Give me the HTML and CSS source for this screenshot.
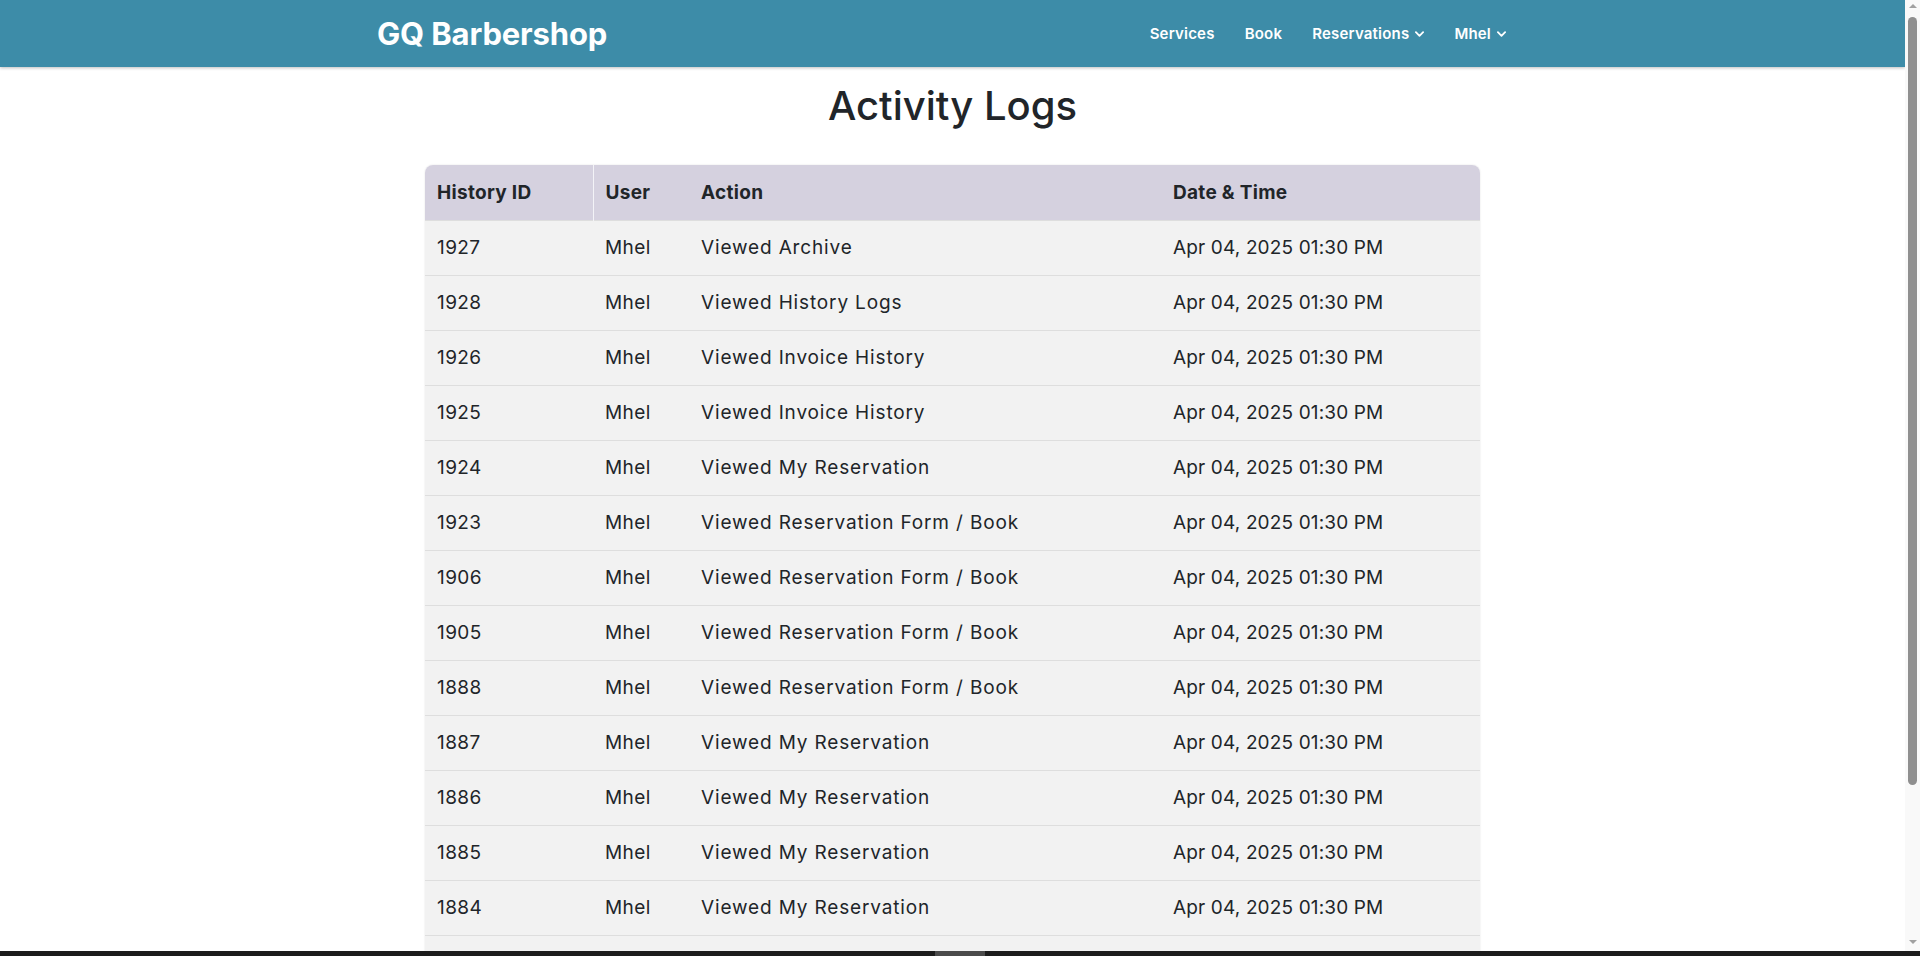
FILE: index.html
```html
<!DOCTYPE html>
<html lang="en">
<head>
<meta charset="utf-8">
<title>Activity Logs - GQ Barbershop</title>
<link rel="stylesheet" href="styles.css">
</head>
<body>
<header class="navbar">
  <a class="brand" href="#">GQ Barbershop</a>
  <nav class="nav-links">
    <a href="#" class="nav-link">Services</a>
    <a href="#" class="nav-link">Book</a>
    <a href="#" class="nav-link">Reservations <svg class="chev" viewBox="0 0 10 6" width="9" height="6"><path d="M1 1l4 4 4-4" fill="none" stroke="#fff" stroke-width="2" stroke-linecap="round" stroke-linejoin="round"/></svg></a>
    <a href="#" class="nav-link">Mhel <svg class="chev" viewBox="0 0 10 6" width="9" height="6"><path d="M1 1l4 4 4-4" fill="none" stroke="#fff" stroke-width="2" stroke-linecap="round" stroke-linejoin="round"/></svg></a>
  </nav>
</header>
<main class="content">
  <h1 class="title">Activity Logs</h1>
  <div class="table-wrap">
    <table class="logs">
      <thead>
        <tr><th class="c-id">History ID</th><th class="c-user">User</th><th class="c-action">Action</th><th class="c-date">Date &amp; Time</th></tr>
      </thead>
      <tbody>
        <tr><td>1927</td><td>Mhel</td><td class="act">Viewed Archive</td><td class="dt">Apr 04, 2025 01:30 PM</td></tr>
        <tr><td>1928</td><td>Mhel</td><td class="act">Viewed History Logs</td><td class="dt">Apr 04, 2025 01:30 PM</td></tr>
        <tr><td>1926</td><td>Mhel</td><td class="act">Viewed Invoice History</td><td class="dt">Apr 04, 2025 01:30 PM</td></tr>
        <tr><td>1925</td><td>Mhel</td><td class="act">Viewed Invoice History</td><td class="dt">Apr 04, 2025 01:30 PM</td></tr>
        <tr><td>1924</td><td>Mhel</td><td class="act">Viewed My Reservation</td><td class="dt">Apr 04, 2025 01:30 PM</td></tr>
        <tr><td>1923</td><td>Mhel</td><td class="act">Viewed Reservation Form / Book</td><td class="dt">Apr 04, 2025 01:30 PM</td></tr>
        <tr><td>1906</td><td>Mhel</td><td class="act">Viewed Reservation Form / Book</td><td class="dt">Apr 04, 2025 01:30 PM</td></tr>
        <tr><td>1905</td><td>Mhel</td><td class="act">Viewed Reservation Form / Book</td><td class="dt">Apr 04, 2025 01:30 PM</td></tr>
        <tr><td>1888</td><td>Mhel</td><td class="act">Viewed Reservation Form / Book</td><td class="dt">Apr 04, 2025 01:30 PM</td></tr>
        <tr><td>1887</td><td>Mhel</td><td class="act">Viewed My Reservation</td><td class="dt">Apr 04, 2025 01:30 PM</td></tr>
        <tr><td>1886</td><td>Mhel</td><td class="act">Viewed My Reservation</td><td class="dt">Apr 04, 2025 01:30 PM</td></tr>
        <tr><td>1885</td><td>Mhel</td><td class="act">Viewed My Reservation</td><td class="dt">Apr 04, 2025 01:30 PM</td></tr>
        <tr><td>1884</td><td>Mhel</td><td class="act">Viewed My Reservation</td><td class="dt">Apr 04, 2025 01:30 PM</td></tr>
        <tr><td>1883</td><td>Mhel</td><td class="act">Viewed My Reservation</td><td class="dt">Apr 04, 2025 01:29 PM</td></tr>
        <tr><td>1882</td><td>Mhel</td><td class="act">Viewed Services</td><td class="dt">Apr 04, 2025 01:29 PM</td></tr>
        <tr><td>1881</td><td>Mhel</td><td class="act">Viewed Services</td><td class="dt">Apr 04, 2025 01:29 PM</td></tr>
      </tbody>
    </table>
  </div>
</main>
<div class="scrollbar" aria-hidden="true">
  <span class="sb-arrow sb-up"></span>
  <span class="sb-thumb"></span>
  <span class="sb-arrow sb-down"></span>
</div>
<div class="taskbar"><span class="taskbar-thumb"></span></div>
</body>
</html>
```
FILE: styles.css
```css
* { box-sizing: border-box; }

body {
  margin: 0 15px 0 0;
  font-family: "Inter", "Open Sans", sans-serif;
  color: #212529;
  background: #fff;
}

.navbar {
  height: 67px;
  background: #3d8ca8;
  display: flex;
  align-items: center;
  justify-content: space-between;
  padding: 0 399px 0 377px;
  box-shadow: 0 1px 3px rgba(0,0,0,0.25);
}

.brand {
  color: #fff;
  text-decoration: none;
  font-weight: 700;
  font-size: 31px;
  letter-spacing: -0.15px;
}

.nav-links {
  display: flex;
  align-items: center;
  gap: 30px;
}

.nav-link {
  color: #fff;
  text-decoration: none;
  font-size: 15px;
  font-weight: 600;
  letter-spacing: 0.2px;
  display: flex;
  align-items: center;
  gap: 6px;
}

.chev { display: block; }

.content {
  padding: 15px 0 48px;
}

.title {
  margin: 0 0 35px;
  text-align: center;
  font-size: 40px;
  font-weight: 500;
  line-height: 48px;
  color: #212529;
}

.table-wrap {
  width: 1055px;
  margin: 0 auto;
  border-radius: 8px 8px 0 0;
  overflow: hidden;
  box-shadow: 0 0 2px rgba(0,0,0,0.12);
}

.logs {
  width: 100%;
  border-collapse: collapse;
  table-layout: fixed;
  font-size: 19px;
  letter-spacing: 0.4px;
}

.logs th, .logs td {
  text-align: left;
  padding: 0 12px;
  height: 55px;
  vertical-align: middle;
}

.logs th {
  background: #d5d1df;
  font-weight: 700;
  font-size: 19px;
  letter-spacing: 0.3px;
}

.logs th.c-id { width: 168px; border-right: 1px solid #f3f3f7; }
.logs th.c-user { width: 96px; }
.logs th.c-action { width: 472px; }

.logs td {
  background: #f2f2f2;
  border-top: 1px solid #dedede;
  font-weight: 400;
}

.logs td.act { letter-spacing: 0.85px; }
.logs td.dt { letter-spacing: 0.15px; }

.scrollbar {
  position: fixed;
  top: 0;
  right: 0;
  bottom: 0;
  width: 15px;
  background: #f9f9f9;
  display: flex;
  flex-direction: column;
  align-items: center;
  padding: 4px 0 6px;
}

.sb-arrow {
  width: 0;
  height: 0;
  border-left: 4px solid transparent;
  border-right: 4px solid transparent;
}

.sb-up { border-bottom: 4px solid #a0a0a0; }
.sb-down { border-top: 4px solid #a0a0a0; margin-top: auto; margin-bottom: 6px; }

.sb-thumb {
  width: 9px;
  height: 768px;
  margin-top: 9px;
  border-radius: 5px;
  background: #8f8f8f;
}

.taskbar {
  position: fixed;
  left: 0;
  right: 0;
  bottom: 0;
  height: 5px;
  background: #1c1c1c;
}

.taskbar-thumb {
  position: absolute;
  left: 935px;
  width: 50px;
  top: 0;
  bottom: 0;
  background: #4b4b4b;
}
```
